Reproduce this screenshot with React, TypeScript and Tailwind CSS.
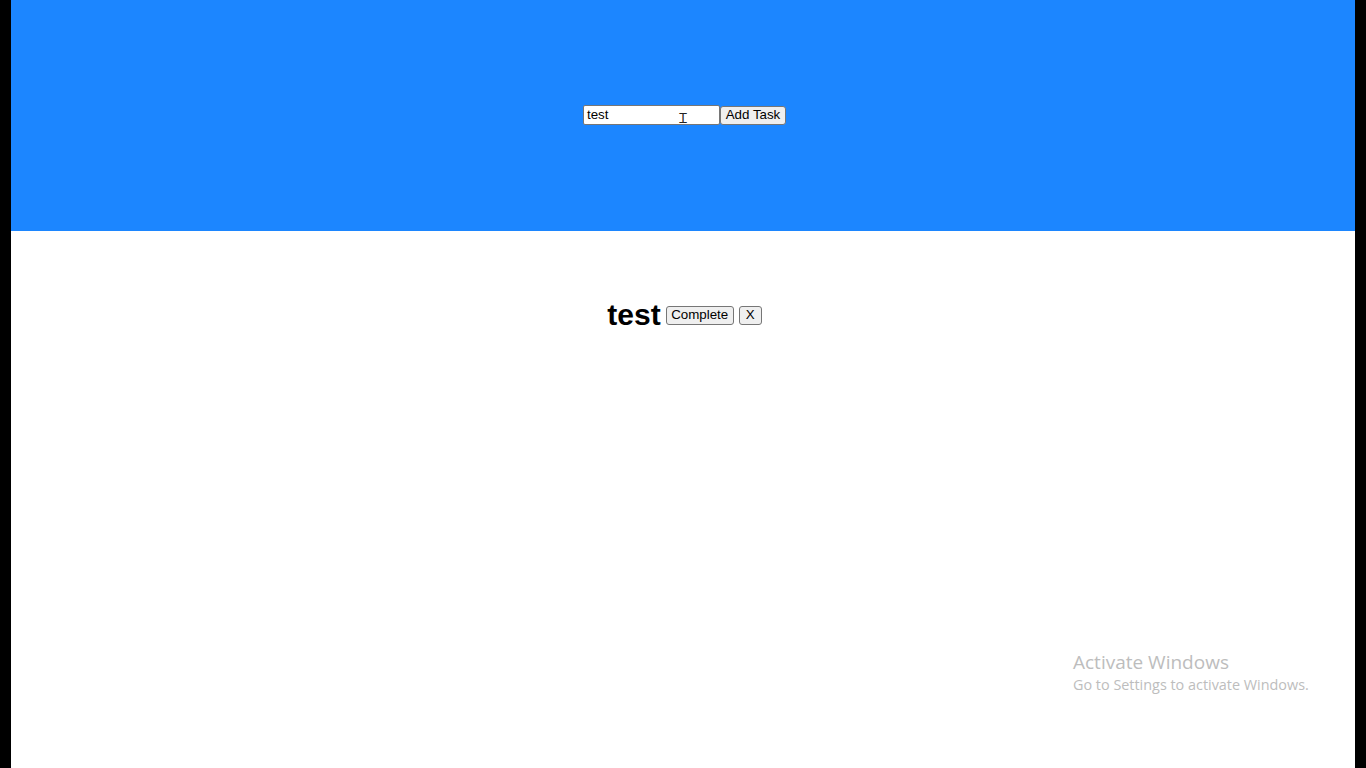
import React from "react";

export default function App() {
  return (
    <div className="w-[1366px] h-[768px] bg-black flex" style={{ fontFamily: '"Liberation Sans", Arial, sans-serif' }}>
      <div className="ml-[11px] w-[1344px] h-full bg-white flex flex-col relative">
        <div className="h-[231px] bg-[#1c86ff] flex items-center justify-center">
          <div className="flex items-center -mt-[1px] ml-[3px]">
            <div className="relative w-[137px] h-[20px] bg-white border border-[#767676] rounded-[2px] flex items-center pl-[3px] text-[13.33px] text-black">
              test
              <span className="absolute left-[95px] top-[6px] text-[13px] leading-none text-[#222]" style={{ fontFamily: '"DejaVu Sans", sans-serif' }}>Ꮖ</span>
            </div>
            <button className="w-[66px] h-[19px] bg-[#efefef] border border-[#767676] rounded-[3px] text-[13.33px] text-black flex items-center justify-center leading-none">
              Add Task
            </button>
          </div>
        </div>
        <div className="flex items-center justify-center mt-[69px] ml-[3px]">
          <span className="text-[30px] font-bold text-black leading-none">test</span>
          <button className="ml-[5px] w-[68px] h-[19px] bg-[#efefef] border border-[#767676] rounded-[3px] text-[13.33px] text-black flex items-center justify-center leading-none">
            Complete
          </button>
          <button className="ml-[5px] w-[23px] h-[19px] bg-[#efefef] border border-[#767676] rounded-[3px] text-[13.33px] text-black flex items-center justify-center leading-none">
            X
          </button>
        </div>
        <div className="absolute left-[1062px] top-[650px] text-[#bdbdbd]" style={{ fontFamily: '"Open Sans", "Noto Sans", sans-serif' }}>
          <div className="text-[19px] leading-[25px]">Activate Windows</div>
          <div className="text-[14.4px] leading-[20px]">Go to Settings to activate Windows.</div>
        </div>
      </div>
    </div>
  );
}
